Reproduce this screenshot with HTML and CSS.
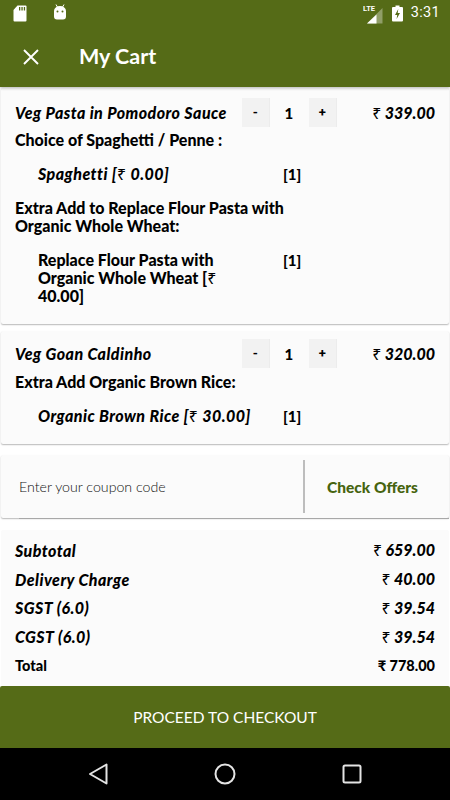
FILE: index.html
```html
<!DOCTYPE html>
<html lang="en">
<head>
<meta charset="utf-8">
<title>My Cart</title>
<link rel="stylesheet" href="styles.css">
</head>
<body>
<div class="phone">
  <header class="topbar">
    <div class="status">
      <svg class="st-sd" viewBox="0 0 14 17"><path d="M4.500 0.500H12.500a1 1 0 0 1 1 1V15.500a1 1 0 0 1-1 1H1.500a1 1 0 0 1-1-1V5Z" fill="#fff"/><path d="M6 2h1.300v3.400H6zM8.400 2h1.300v3.400H8.400zM10.800 2h1.300v3.400h-1.300z" fill="#556b17"/></svg>
      <svg class="st-android" viewBox="0 0 14 16"><path d="M3 0.500 4.600 3.400M11 0.500 9.400 3.400" stroke="#fff" stroke-width="1" fill="none"/><path d="M1 7a6 5 0 0 1 12 0v5.500a3 3 0 0 1-3 3H4a3 3 0 0 1-3-3Z" fill="#fff"/><circle cx="4.500" cy="7.500" r="1" fill="#556b17"/><circle cx="9.500" cy="7.500" r="1" fill="#556b17"/></svg>
      <span class="st-space"></span>
      <svg class="st-signal" viewBox="0 0 20 21"><text x="0" y="8" class="lte">LTE</text><path d="M19.500 5V20.500H4Z" fill="#fff" opacity=".35"/><path d="M13.500 11.500V20.500H4Z" fill="#fff"/></svg>
      <svg class="st-batt" viewBox="0 0 11 17"><path d="M3.500 0.500h4v1.500h2.500a1 1 0 0 1 1 1V15.500a1 1 0 0 1-1 1H1a1 1 0 0 1-1-1V3a1 1 0 0 1 1-1h2.500Z" fill="#fff"/><path d="M6.300 4 3 10h2.200l-.6 4 3.400-6H5.700Z" fill="#556b17"/></svg>
      <span class="st-time">3:31</span>
    </div>
    <div class="appbar">
      <svg class="close" viewBox="0 0 16 16"><path d="M1 1 15 15M15 1 1 15" stroke="#fff" stroke-width="1.900" fill="none"/></svg>
      <h1 class="title">My Cart</h1>
    </div>
  </header>

  <main class="content">
    <section class="card item-one">
      <div class="item-row">
        <span class="item-name">Veg Pasta in Pomodoro Sauce</span>
        <div class="stepper"><span class="step">-</span><span class="qty">1</span><span class="step">+</span></div>
        <span class="price"><span class="rs">₹</span> 339.00</span>
      </div>
      <div class="group">Choice of Spaghetti / Penne :</div>
      <div class="option"><span class="opt-name">Spaghetti [<span class="rs">₹</span> 0.00]</span><span class="opt-qty">[1]</span></div>
      <div class="group">Extra Add to Replace Flour Pasta with Organic Whole Wheat:</div>
      <div class="option"><span class="opt-name narrow">Replace Flour Pasta with Organic Whole Wheat [<span class="rs">₹</span> 40.00]</span><span class="opt-qty">[1]</span></div>
    </section>

    <section class="card item-two">
      <div class="item-row">
        <span class="item-name">Veg Goan Caldinho</span>
        <div class="stepper"><span class="step">-</span><span class="qty">1</span><span class="step">+</span></div>
        <span class="price"><span class="rs">₹</span> 320.00</span>
      </div>
      <div class="group">Extra Add Organic Brown Rice:</div>
      <div class="option"><span class="opt-name">Organic Brown Rice [<span class="rs">₹</span> 30.00]</span><span class="opt-qty">[1]</span></div>
    </section>

    <section class="card coupon">
      <div class="coupon-field">Enter your coupon code</div>
      <div class="coupon-btn">Check Offers</div>
    </section>

    <section class="card summary">
      <div class="sum-row"><span>Subtotal</span><span class="sum-val"><span class="rs">₹</span> 659.00</span></div>
      <div class="sum-row"><span>Delivery Charge</span><span class="sum-val"><span class="rs">₹</span> 40.00</span></div>
      <div class="sum-row"><span>SGST (6.0)</span><span class="sum-val"><span class="rs">₹</span> 39.54</span></div>
      <div class="sum-row"><span>CGST (6.0)</span><span class="sum-val"><span class="rs">₹</span> 39.54</span></div>
      <div class="sum-row total"><span>Total</span><span class="sum-val">₹ 778.00</span></div>
    </section>
  </main>

  <div class="checkout">PROCEED TO CHECKOUT</div>

  <nav class="navbar">
    <svg class="nav-ic" viewBox="0 0 24 24"><path d="M20.500 2.500V21.500L4 12Z" fill="none" stroke="#e4e4e4" stroke-width="2" stroke-linejoin="round"/></svg>
    <svg class="nav-ic" viewBox="0 0 24 24"><circle cx="12" cy="12" r="9.500" fill="none" stroke="#e4e4e4" stroke-width="2"/></svg>
    <svg class="nav-ic" viewBox="0 0 24 24"><rect x="3.500" y="3.500" width="17" height="17" rx="1.500" fill="none" stroke="#e4e4e4" stroke-width="2"/></svg>
  </nav>
</div>
</body>
</html>
```
FILE: styles.css
```css
* { box-sizing: border-box; }
html, body { margin: 0; padding: 0; }
body { background: #fff; font-family: "Lato", "Noto Sans", sans-serif; color: #000; }
.phone { width: 450px; height: 800px; display: flex; flex-direction: column; overflow: hidden; }

.topbar { height: 87px; background: #556b17; box-shadow: 0 1px 3px rgba(0,0,0,.3); position: relative; z-index: 2; flex: none; }
.status { height: 24px; display: flex; align-items: center; padding: 0 10px 0 13px; }
.st-sd { width: 14px; height: 17px; margin-top: 2px; }
.st-android { width: 14px; height: 16px; margin-left: 26px; margin-top: -1px; }
.st-space { flex: 1; }
.st-signal { width: 20px; height: 21px; margin-top: 2px; }
.lte { font: 700 7.500px "Roboto", sans-serif; fill: #fff; }
.st-batt { width: 11px; height: 17px; margin-left: 9px; margin-top: 2px; }
.st-time { font: 400 14.500px "Roboto", sans-serif; color: #fff; margin-left: 8px; margin-top: 1px; letter-spacing: .3px; }

.appbar { height: 63px; display: flex; align-items: center; padding-left: 23px; }
.close { width: 16px; height: 16px; margin-top: 2px; }
.title { margin: 0 0 0 40px; font: 700 21.500px "Lato", sans-serif; color: #fff; }

.content { flex: 1; display: flex; flex-direction: column; min-height: 0; padding: 1px 1px 0; }
.card { background: #fbfbfb; border-radius: 2px; box-shadow: 0 1px 1.500px rgba(0,0,0,.28); padding: 0 14px; }
.item-one { height: 236px; padding-top: 10px; }
.item-two { height: 113px; margin-top: 7px; padding-top: 8px; }

.item-row { display: flex; align-items: center; height: 29px; font-weight: 900; font-style: italic; font-size: 16px; letter-spacing: .45px; }
.item-name { flex: 1; white-space: nowrap; }
.stepper { display: flex; align-items: center; width: 94px; flex: none; }
.step { width: 27px; height: 29px; background: #f2f2f2; display: flex; align-items: center; justify-content: center; font: 700 13px "Roboto", sans-serif; box-shadow: 1px 0 0 #ececec; }
.qty { flex: 1; text-align: center; font: 900 15px "Lato", sans-serif; }
.price { width: 99px; flex: none; text-align: right; white-space: nowrap; letter-spacing: 0; }
.rs { font-family: "Noto Sans", sans-serif; font-weight: 400; font-style: normal; }

.group { font-weight: 900; font-size: 16px; line-height: 18px; width: 290px; margin-top: 4px; }
.item-two .group { margin-top: 5px; }
.option { display: flex; font-weight: 900; font-size: 16px; line-height: 18px; margin: 16px 0 16px 23px; }
.opt-name { width: 245px; flex: none; font-style: italic; white-space: nowrap; letter-spacing: .45px; }
.opt-name.narrow { white-space: normal; width: 205px; margin-right: 40px; font-style: normal; letter-spacing: 0; }
.opt-qty { font-size: 15px; }

.coupon { height: 63px; margin-top: 11px; padding: 5px 0 0 18px; display: flex; position: relative; }
.coupon::after { content: ""; position: absolute; left: 18px; right: 0; bottom: -1px; height: 1px; background: #a8a8a8; }
.coupon-field { width: 286px; height: 53px; flex: none; display: flex; align-items: center; font: 300 14.200px "Lato", sans-serif; color: #111; border-right: 2px solid #bdbdbd; }
.coupon-btn { flex: 1; height: 53px; padding-right: 9px; display: flex; align-items: center; justify-content: center; font: 900 15.500px "Lato", sans-serif; color: #46640f; }

.summary { margin-top: 12px; flex: 1; padding-top: 6px; box-shadow: none; }
.sum-row { height: 28.800px; display: flex; align-items: center; justify-content: space-between; font-weight: 900; font-style: italic; font-size: 16px; letter-spacing: .45px; }
.sum-val { letter-spacing: 0; }
.sum-row.total { font-style: normal; font-size: 14.500px; letter-spacing: 0; }

.checkout { height: 62px; flex: none; background: #556b17; color: #fff; display: flex; align-items: center; justify-content: center; font: 400 15.500px "Lato", sans-serif; border-radius: 2px 2px 0 0; }
.navbar { height: 52px; flex: none; background: #000; display: flex; align-items: center; justify-content: center; gap: 103px; }
.nav-ic { width: 24px; height: 24px; }
```
